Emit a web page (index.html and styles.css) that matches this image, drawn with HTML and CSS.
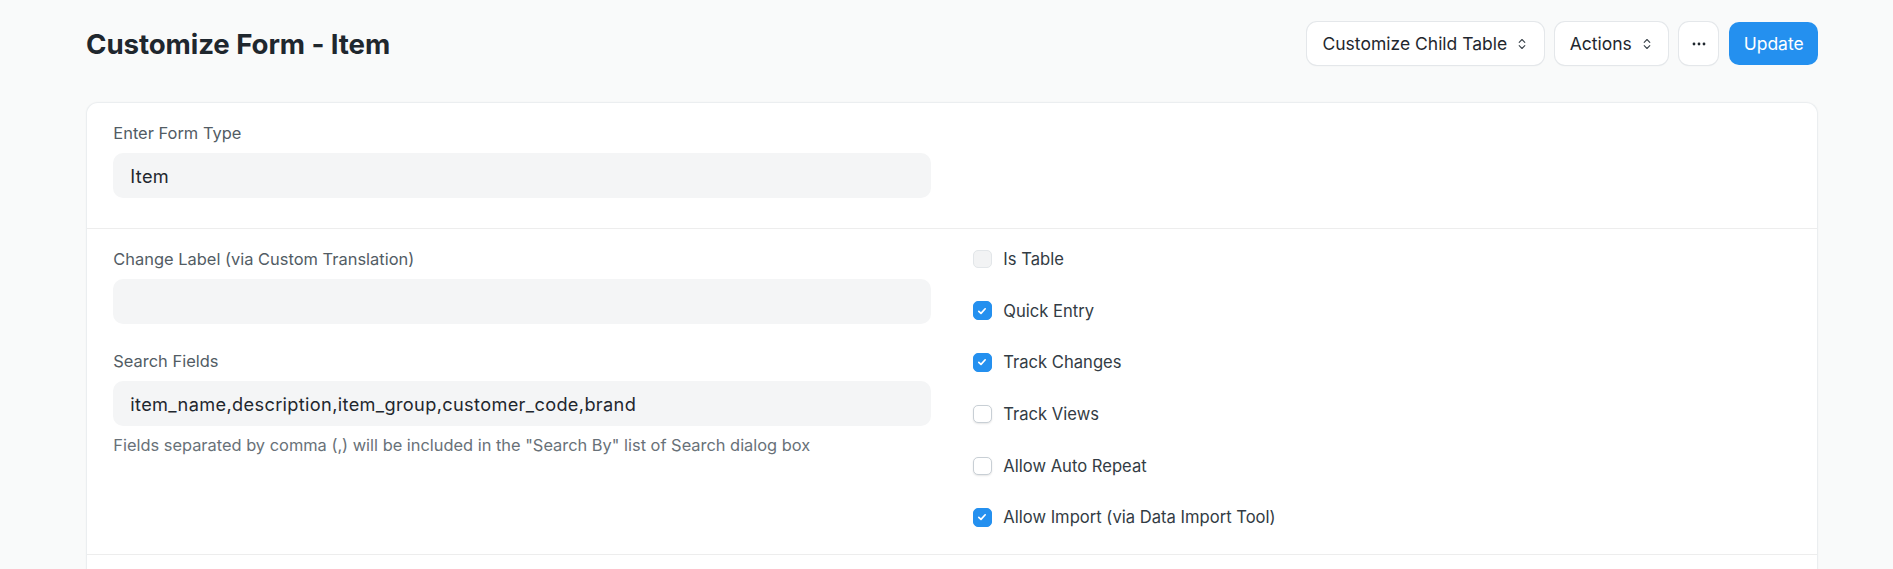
FILE: index.html
```html
<!DOCTYPE html>
<html lang="en">
<head>
<meta charset="utf-8">
<title>Customize Form - Item</title>
<link rel="stylesheet" href="styles.css">
</head>
<body>
<div class="page">
  <header class="page-head">
    <h1 class="title">Customize Form - Item</h1>
    <div class="actions">
      <button class="btn btn-dropdown">Customize Child Table
        <svg class="sort-icon" viewBox="0 0 8 12" width="8" height="12"><path d="M1.2 4.3 L4 1.5 L6.8 4.3 M1.2 7.7 L4 10.5 L6.8 7.7" fill="none" stroke="currentColor" stroke-width="1.1" stroke-linecap="round" stroke-linejoin="round"/></svg>
      </button>
      <button class="btn btn-dropdown">Actions
        <svg class="sort-icon" viewBox="0 0 8 12" width="8" height="12"><path d="M1.2 4.3 L4 1.5 L6.8 4.3 M1.2 7.7 L4 10.5 L6.8 7.7" fill="none" stroke="currentColor" stroke-width="1.1" stroke-linecap="round" stroke-linejoin="round"/></svg>
      </button>
      <button class="btn btn-more" aria-label="More">
        <svg viewBox="0 0 14 4" width="14" height="4"><circle cx="2" cy="2" r="1.4" fill="currentColor"/><circle cx="7" cy="2" r="1.4" fill="currentColor"/><circle cx="12" cy="2" r="1.4" fill="currentColor"/></svg>
      </button>
      <button class="btn btn-primary">Update</button>
    </div>
  </header>

  <main class="card">
    <section class="section section-first">
      <div class="col">
        <div class="field">
          <label class="label">Enter Form Type</label>
          <div class="input">Item</div>
        </div>
      </div>
      <div class="col"></div>
    </section>

    <section class="section">
      <div class="col">
        <div class="field">
          <label class="label">Change Label (via Custom Translation)</label>
          <div class="input"></div>
        </div>
        <div class="field">
          <label class="label">Search Fields</label>
          <div class="input">item_name,description,item_group,customer_code,brand</div>
          <p class="help">Fields separated by comma (,) will be included in the "Search By" list of Search dialog box</p>
        </div>
      </div>
      <div class="col checks">
        <div class="check"><span class="box box-disabled"></span><span class="check-label">Is Table</span></div>
        <div class="check"><span class="box box-checked"><svg viewBox="0 0 12 12" width="12" height="12"><path d="M2.8 6.3 L5 8.4 L9.2 3.8" fill="none" stroke="#fff" stroke-width="1.7" stroke-linecap="round" stroke-linejoin="round"/></svg></span><span class="check-label">Quick Entry</span></div>
        <div class="check"><span class="box box-checked"><svg viewBox="0 0 12 12" width="12" height="12"><path d="M2.8 6.3 L5 8.4 L9.2 3.8" fill="none" stroke="#fff" stroke-width="1.7" stroke-linecap="round" stroke-linejoin="round"/></svg></span><span class="check-label">Track Changes</span></div>
        <div class="check"><span class="box"></span><span class="check-label">Track Views</span></div>
        <div class="check"><span class="box"></span><span class="check-label">Allow Auto Repeat</span></div>
        <div class="check"><span class="box box-checked"><svg viewBox="0 0 12 12" width="12" height="12"><path d="M2.8 6.3 L5 8.4 L9.2 3.8" fill="none" stroke="#fff" stroke-width="1.7" stroke-linecap="round" stroke-linejoin="round"/></svg></span><span class="check-label">Allow Import (via Data Import Tool)</span></div>
      </div>
    </section>

    <section class="section section-empty"></section>
  </main>
</div>
</body>
</html>
```

FILE: styles.css
```css
* { box-sizing: border-box; }

html, body {
  margin: 0;
  padding: 0;
  background: #f9fafa;
  font-family: Inter, "Noto Sans", "Liberation Sans", sans-serif;
  color: #1f272e;
  overflow: hidden;
}

.page {
  padding: 22px 75px 0 86px;
}

.page-head {
  display: flex;
  justify-content: space-between;
  align-items: center;
  height: 43px;
  margin-bottom: 37px;
}

.title {
  margin: 0;
  font-size: 27.7px;
  font-weight: 700;
  line-height: 34px;
  color: #1f272e;
  letter-spacing: -0.1px;
}

.actions {
  display: flex;
  gap: 11px;
  align-items: center;
}

.btn {
  display: inline-flex;
  align-items: center;
  height: 43px;
  border: none;
  border-radius: 10px;
  background: #fff;
  box-shadow: 0 0 0 1px #e4e7ea, 0 1px 2px rgba(0, 0, 0, 0.06);
  font-family: inherit;
  font-size: 17.5px;
  color: #1f272e;
  padding: 0 17.5px 0 15px;
  cursor: pointer;
}

.sort-icon {
  margin-left: 11px;
  color: #3b444c;
}

.btn-more {
  width: 39px;
  padding: 0;
  justify-content: center;
  color: #1f272e;
}

.btn-primary {
  background: #2490ef;
  color: #fff;
  box-shadow: none;
  padding: 0 14.3px;
}

.card {
  background: #fff;
  border: 1px solid #ebeef0;
  border-bottom: none;
  border-radius: 12px 12px 0 0;
  box-shadow: 0 0.5px 2px rgba(0, 0, 0, 0.04);
  min-height: 480px;
}

.section {
  display: grid;
  grid-template-columns: 1fr 1fr;
  column-gap: 42.6px;
  padding: 20px 26.3px 26.2px;
  border-bottom: 1px solid #ededed;
}

.section-first {
  padding-bottom: 29.3px;
}

.section-empty {
  border-bottom: none;
  min-height: 40px;
}

.field {
  margin-bottom: 26.8px;
}

.field:last-child {
  margin-bottom: 0;
}

.label {
  display: block;
  font-size: 16.45px;
  line-height: 20px;
  color: #525c64;
  margin-bottom: 10px;
}

.input {
  height: 45.4px;
  border-radius: 10px;
  background: #f4f5f6;
  padding: 0 17px;
  display: flex;
  align-items: center;
  font-size: 18.2px;
  letter-spacing: 0.34px;
  color: #1f272e;
}

.help {
  margin: 9.2px 0 0;
  font-size: 16.4px;
  line-height: 20px;
  color: #687178;
}

.checks {
  display: flex;
  flex-direction: column;
  gap: 31.7px;
  padding-top: 0.3px;
}

.check {
  display: flex;
  align-items: center;
  height: 20px;
}

.box {
  width: 18.4px;
  height: 18.4px;
  border-radius: 5px;
  border: 1px solid #c8cfd5;
  background: #fff;
  box-shadow: 0 1px 2px rgba(0, 0, 0, 0.1);
  margin-right: 11.6px;
  display: flex;
  align-items: center;
  justify-content: center;
  flex-shrink: 0;
}

.box-disabled {
  background: #f2f3f4;
  border-color: #e2e6e9;
  box-shadow: none;
}

.box-checked {
  background: #2490ef;
  border-color: #2490ef;
  box-shadow: none;
}

.check-label {
  font-size: 16.6px;
  line-height: 20px;
  color: #333c44;
}
```
